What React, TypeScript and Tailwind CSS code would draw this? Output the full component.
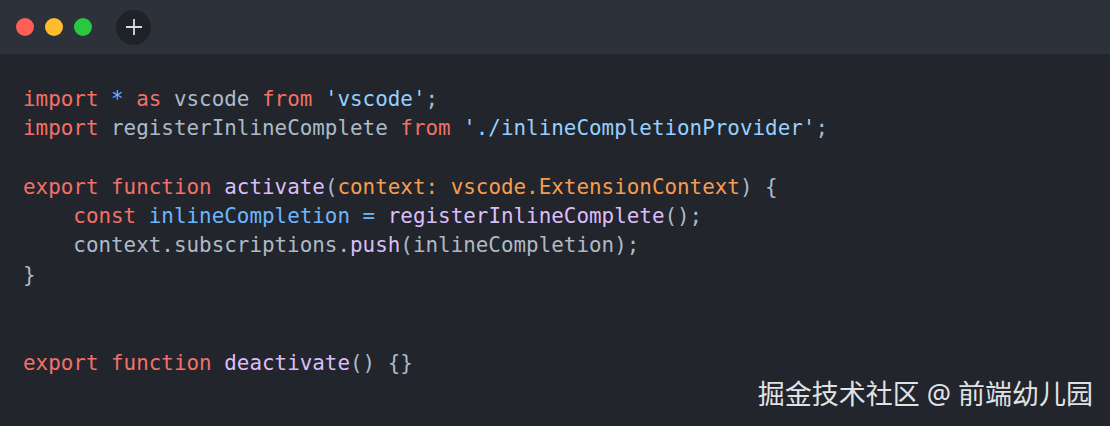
const kw = "text-[#f47067]";
const str = "text-[#96d0ff]";
const fn = "text-[#dcbdfb]";
const vr = "text-[#6cb6ff]";
const prm = "text-[#f69d50]";
const txt = "text-[#adbac7]";

type Tok = [string, string];

const lines: Tok[][] = [
  [[kw, "import"], [txt, " "], [vr, "*"], [txt, " "], [kw, "as"], [txt, " vscode "], [kw, "from"], [txt, " "], [str, "'vscode'"], [txt, ";"]],
  [[kw, "import"], [txt, " registerInlineComplete "], [kw, "from"], [txt, " "], [str, "'./inlineCompletionProvider'"], [txt, ";"]],
  [],
  [[kw, "export"], [txt, " "], [kw, "function"], [txt, " "], [fn, "activate"], [txt, "("], [prm, "context: vscode.ExtensionContext"], [txt, ") {"]],
  [[txt, "    "], [kw, "const"], [txt, " "], [vr, "inlineCompletion"], [txt, " "], [vr, "="], [txt, " "], [fn, "registerInlineComplete"], [txt, "();"]],
  [[txt, "    context.subscriptions."], [fn, "push"], [txt, "(inlineCompletion);"]],
  [[txt, "}"]],
  [],
  [],
  [[kw, "export"], [txt, " "], [kw, "function"], [txt, " "], [fn, "deactivate"], [txt, "() {}"]],
];

export default function App() {
  return (
    <div className="w-[1110px] h-[426px] bg-[#22252b] flex flex-col overflow-hidden">
      <div className="h-[54px] bg-[#2d3139] flex items-center px-[16px] shrink-0">
        <div className="flex gap-[11px]">
          <span className="w-[18px] h-[18px] rounded-full bg-[#ff5f57]" />
          <span className="w-[18px] h-[18px] rounded-full bg-[#febc2e]" />
          <span className="w-[18px] h-[18px] rounded-full bg-[#28c840]" />
        </div>
        <div className="ml-[24px] w-[35px] h-[35px] rounded-full bg-[#1f2227] flex items-center justify-center">
          <svg width="18" height="18" viewBox="0 0 18 18">
            <path d="M9 1v16M1 9h16" stroke="#d8dbe0" strokeWidth="1.8" />
          </svg>
        </div>
      </div>
      <div className="relative flex-1">
        <pre className="pt-[31px] pl-[23px] font-['DejaVu_Sans_Mono',monospace] text-[20.9px] leading-[29.3px]">
          {lines.map((l, i) => (
            <div key={i} className="h-[29.3px] whitespace-pre">
              {l.map(([c, t], j) => (
                <span key={j} className={c}>
                  {t}
                </span>
              ))}
            </div>
          ))}
        </pre>
        <div className="absolute right-[17px] bottom-[14px] text-[27px] leading-[36px] text-[#e0e2e5] font-['Noto_Sans','Noto_Sans_CJK_SC',sans-serif]">
          掘金技术社区 @ 前端幼儿园
        </div>
      </div>
    </div>
  );
}
